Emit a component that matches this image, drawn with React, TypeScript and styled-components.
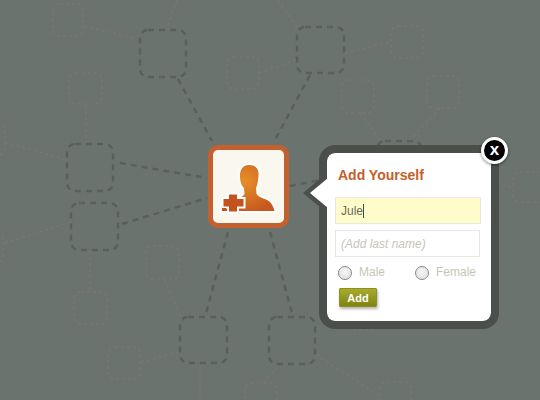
import React from "react";
import styled, { createGlobalStyle } from "styled-components";

type Box = [number, number, number, number];
type Seg = [number, number, number, number];

const bigNodes: Box[] = [
	[140, 30, 46, 47],
	[67, 144, 46, 47],
	[297, 27, 47, 46],
	[71, 203, 47, 47],
	[180, 317, 47, 46],
	[269, 317, 46, 47],
	[377, 141, 45, 60],
];

const smallNodes: Box[] = [
	[53, 4, 30, 32],
	[69, 73, 33, 31],
	[227, 57, 32, 32],
	[391, 26, 32, 32],
	[342, 80, 32, 33],
	[427, 76, 32, 32],
	[146, 246, 33, 33],
	[74, 292, 33, 32],
	[108, 347, 32, 32],
	[245, 383, 32, 32],
	[513, 172, 33, 30],
	[-28, 123, 33, 32],
	[-28, 233, 31, 30],
	[380, 382, 31, 32],
];

const bigLinks: Seg[] = [
	[178, 79, 212, 141],
	[310, 75, 275, 140],
	[120, 163, 207, 178],
	[122, 224, 207, 198],
	[228, 232, 205, 317],
	[270, 232, 293, 317],
	[290, 186, 320, 180],
];

const smallLinks: Seg[] = [
	[177, 0, 167, 28],
	[84, 26, 138, 39],
	[259, 73, 296, 60],
	[345, 53, 390, 42],
	[278, 0, 297, 27],
	[86, 105, 86, 143],
	[5, 142, 66, 160],
	[5, 243, 70, 222],
	[90, 251, 90, 291],
	[165, 280, 182, 320],
	[141, 362, 180, 352],
	[200, 365, 200, 400],
	[277, 367, 263, 383],
	[360, 113, 380, 140],
	[440, 108, 410, 140],
	[497, 183, 512, 188],
	[316, 355, 378, 395],
	[353, 330, 378, 330],
];

const GlobalStyle = createGlobalStyle`
	html,
	body {
		margin: 0;
		background: #6b736e;
	}
`;

const Stage = styled.div`
	position: relative;
	display: flex;
	align-items: flex-start;
	gap: 30px;
	width: 540px;
	height: 400px;
	box-sizing: border-box;
	padding: 145px 0 0 208px;
	overflow: hidden;
	background: #6b736e;
	font-family: "Liberation Sans", Arial, sans-serif;
`;

const Network = styled.svg`
	position: absolute;
	left: 0;
	top: 0;
`;

const Avatar = styled.div`
	position: relative;
	display: flex;
	width: 81px;
	height: 83px;
	box-sizing: border-box;
	border: 5px solid #c3602f;
	border-radius: 10px;
	background: #faf7ef;
`;

const Popover = styled.div`
	position: relative;
	display: flex;
	flex-direction: column;
	align-items: flex-start;
	width: 180px;
	height: 184px;
	box-sizing: border-box;
	padding: 15px 0 0 8px;
	border: 8px solid #4a4f4c;
	border-radius: 16px;
	background: #fff;
	background-clip: padding-box;

	&::before,
	&::after {
		content: "";
		position: absolute;
		clip-path: polygon(100% 0, 100% 100%, 0 50%);
	}

	&::before {
		left: -24px;
		top: 20px;
		width: 24px;
		height: 40px;
		background: #4a4f4c;
	}

	&::after {
		left: -17px;
		top: 25px;
		width: 18px;
		height: 30px;
		background: #fff;
	}
`;

const Close = styled.button`
	position: absolute;
	right: -17px;
	top: -16px;
	z-index: 1;
	width: 27px;
	height: 27px;
	box-sizing: border-box;
	padding: 0 0 3px;
	border: 3px solid #fff;
	border-radius: 50%;
	background: #000;
	box-shadow: 0 1px 3px rgba(0, 0, 0, 0.5);
	color: #fff;
	font: bold 17px "Liberation Sans", Arial, sans-serif;
`;

const Title = styled.h2`
	margin: 0 0 14px 3px;
	color: #c4602a;
	font-size: 14px;
	line-height: 15px;
	font-weight: bold;
`;

const FieldWrap = styled.div`
	position: relative;
	margin-bottom: 6px;
`;

const Field = styled.input<{ $filled?: boolean; $w: number }>`
	display: block;
	width: ${(p) => p.$w}px;
	height: 27px;
	box-sizing: border-box;
	padding: 0 5px;
	border: 1px solid #e8e8e2;
	border-radius: 0;
	outline: none;
	background: ${(p) => (p.$filled ? "#fffccb" : "#fff")};
	color: #6d6b58;
	font: 12px "Liberation Sans", Arial, sans-serif;

	&::placeholder {
		color: #c9c5b6;
		font-style: italic;
		opacity: 1;
	}
`;

const Caret = styled.span`
	position: absolute;
	left: 28px;
	top: 7px;
	width: 1px;
	height: 14px;
	background: #4a4a3c;
`;

const GenderRow = styled.div`
	display: flex;
	align-items: center;
	margin: 2px 0 0 3px;
`;

const GenderLabel = styled.label<{ $w: number }>`
	display: flex;
	align-items: center;
	gap: 7px;
	width: ${(p) => p.$w}px;
	color: #c9c5b6;
	font-size: 12px;
	line-height: 15px;
`;

const Radio = styled.input`
	appearance: none;
	width: 14px;
	height: 14px;
	margin: 0;
	border: 1px solid #8a8a86;
	border-radius: 50%;
	background: radial-gradient(circle at 50% 40%, #f6f6f6, #dcdcdc);
`;

const AddButton = styled.button`
	width: 38px;
	height: 19px;
	margin: 8px 0 0 4px;
	padding: 0;
	border: 1px solid #8b8f1e;
	border-radius: 1px;
	background: linear-gradient(#a8ab2c, #7f8412);
	box-shadow: 1px 2px 3px rgba(0, 0, 0, 0.3);
	color: #fff;
	font: bold 11px "Liberation Sans", Arial, sans-serif;
`;

const NetworkLines = (): JSX.Element => (
	<Network width={540} height={400}>
		<g fill="none" stroke="#59605c" strokeWidth={2.5} strokeDasharray="6 5">
			{bigNodes.map(([x, y, w, h]) => (
				<rect key={`${x}-${y}`} x={x} y={y} width={w} height={h} rx={8} />
			))}
			{bigLinks.map(([x1, y1, x2, y2]) => (
				<line key={`${x1}-${y1}`} x1={x1} y1={y1} x2={x2} y2={y2} />
			))}
		</g>
		<g fill="none" stroke="#7b7574" strokeWidth={1.5} strokeDasharray="3 3">
			{smallNodes.map(([x, y, w, h]) => (
				<rect key={`${x}-${y}`} x={x} y={y} width={w} height={h} rx={7} />
			))}
			{smallLinks.map(([x1, y1, x2, y2]) => (
				<line key={`${x1}-${y1}`} x1={x1} y1={y1} x2={x2} y2={y2} />
			))}
		</g>
	</Network>
);

const PersonAddIcon = (): JSX.Element => (
	<svg width={71} height={73} viewBox="213 150 71 73">
		<defs>
			<radialGradient id="skin" cx="0.42" cy="0.35" r="0.7">
				<stop offset="0" stopColor="#e78f28" />
				<stop offset="1" stopColor="#c6581f" />
			</radialGradient>
		</defs>
		<path
			d="M249 165C255.5 165 259 168.5 258.5 175C258 181 257.5 185 256 188L256.5 194C258.5 197 263 198 267 200C271 202 273.5 206 274.5 211L223 211C225 205 229 202 234 200C239 198 243 197 244.5 194L244 188C241.5 186 240 181 240 176C240 169 243 165 249 165Z"
			fill="url(#skin)"
			stroke="#fff"
			strokeWidth={4}
			paintOrder="stroke"
		/>
		<path
			d="M229 194.5H237V199H243.5V206.5H237V211.5H229V206.5H223.5V199H229Z"
			fill="#c4521f"
			stroke="#fff"
			strokeWidth={4}
			paintOrder="stroke"
		/>
		<rect x={222} y={208} width={4} height={3} fill="#c4521f" />
	</svg>
);

export default function App(): JSX.Element {
	return (
		<Stage>
			<GlobalStyle />
			<NetworkLines />
			<Avatar>
				<PersonAddIcon />
			</Avatar>
			<Popover>
				<Close>x</Close>
				<Title>Add Yourself</Title>
				<FieldWrap>
					<Field $filled $w={146} defaultValue="Jule" readOnly />
					<Caret />
				</FieldWrap>
				<FieldWrap>
					<Field $w={145} placeholder="(Add last name)" readOnly />
				</FieldWrap>
				<GenderRow>
					<GenderLabel $w={77}>
						<Radio type="radio" name="gender" />
						Male
					</GenderLabel>
					<GenderLabel $w={70}>
						<Radio type="radio" name="gender" />
						Female
					</GenderLabel>
				</GenderRow>
				<AddButton>Add</AddButton>
			</Popover>
		</Stage>
	);
}
